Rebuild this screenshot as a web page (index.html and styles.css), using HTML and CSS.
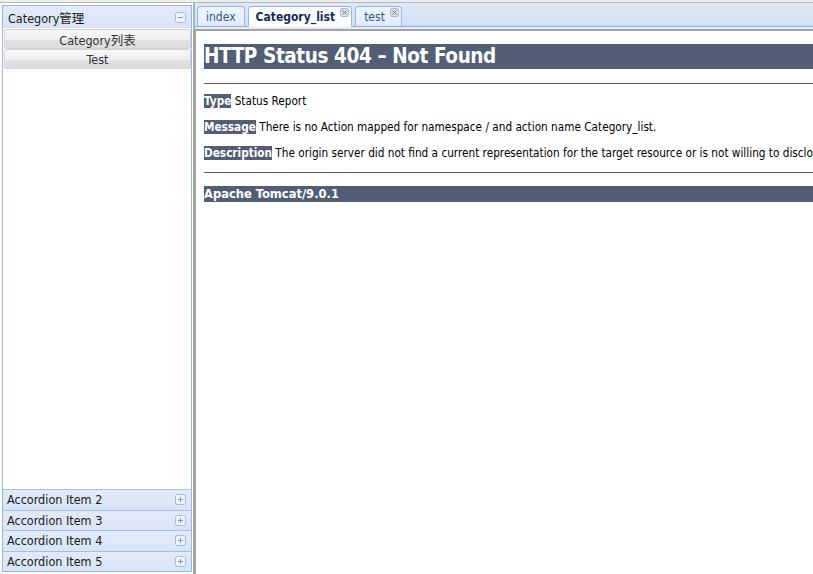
FILE: index.html
```html
<!DOCTYPE html>
<html lang="zh">
<head>
<meta charset="utf-8">
<title>Category</title>
<link rel="stylesheet" href="styles.css">
</head>
<body>
<div class="topline"></div>
<div class="main">
  <aside class="west">
    <div class="acc-head acc-head-open">
      <span class="acc-title">Category管理</span>
      <svg class="tool" width="11" height="11" viewBox="0 0 11 11"><rect x=".5" y=".5" width="10" height="10" rx="2" fill="#EEF3FC" stroke="#9DBAE3"/><path d="M3 5.5h5" stroke="#7E98C2"/></svg>
    </div>
    <div class="acc-body">
      <a class="btn">Category列表</a>
      <a class="btn">Test</a>
    </div>
    <div class="acc-head acc-head-closed">
      <span class="acc-title">Accordion Item 2</span>
      <svg class="tool" width="11" height="11" viewBox="0 0 11 11"><rect x=".5" y=".5" width="10" height="10" rx="2" fill="#EEF3FC" stroke="#9DBAE3"/><path d="M3 5.5h5M5.5 3v5" stroke="#7E98C2"/></svg>
    </div>
    <div class="acc-head acc-head-closed">
      <span class="acc-title">Accordion Item 3</span>
      <svg class="tool" width="11" height="11" viewBox="0 0 11 11"><rect x=".5" y=".5" width="10" height="10" rx="2" fill="#EEF3FC" stroke="#9DBAE3"/><path d="M3 5.5h5M5.5 3v5" stroke="#7E98C2"/></svg>
    </div>
    <div class="acc-head acc-head-closed">
      <span class="acc-title">Accordion Item 4</span>
      <svg class="tool" width="11" height="11" viewBox="0 0 11 11"><rect x=".5" y=".5" width="10" height="10" rx="2" fill="#EEF3FC" stroke="#9DBAE3"/><path d="M3 5.5h5M5.5 3v5" stroke="#7E98C2"/></svg>
    </div>
    <div class="acc-head acc-head-closed">
      <span class="acc-title">Accordion Item 5</span>
      <svg class="tool" width="11" height="11" viewBox="0 0 11 11"><rect x=".5" y=".5" width="10" height="10" rx="2" fill="#EEF3FC" stroke="#9DBAE3"/><path d="M3 5.5h5M5.5 3v5" stroke="#7E98C2"/></svg>
    </div>
  </aside>
  <section class="center">
    <div class="tabs-header">
      <ul class="tabs">
        <li class="tab">index</li>
        <li class="tab tab-selected tab-closable">Category_list<svg class="tab-close" width="9" height="9" viewBox="0 0 9 9"><rect x=".5" y=".5" width="8" height="8" rx="1.5" fill="#DCE2EA" stroke="#AEB8C6"/><path d="M2.5 2.5l4 4M6.5 2.5l-4 4" stroke="#66738A"/></svg></li>
        <li class="tab tab-closable">test<svg class="tab-close" width="9" height="9" viewBox="0 0 9 9"><rect x=".5" y=".5" width="8" height="8" rx="1.5" fill="#DCE2EA" stroke="#AEB8C6"/><path d="M2.5 2.5l4 4M6.5 2.5l-4 4" stroke="#66738A"/></svg></li>
      </ul>
    </div>
    <div class="tabs-gap"></div>
    <div class="frame">
      <h1>HTTP Status 404 – Not Found</h1>
      <hr class="line">
      <p><b>Type</b> Status Report</p>
      <p><b>Message</b> There is no Action mapped for namespace / and action name Category_list.</p>
      <p><b>Description</b> The origin server did not find a current representation for the target resource or is not willing to disclose that one exists.</p>
      <hr class="line line-end">
      <h3>Apache Tomcat/9.0.1</h3>
    </div>
  </section>
</div>
</body>
</html>
```
FILE: styles.css
```css
* { box-sizing: border-box; }
html, body { margin: 0; height: 100%; overflow: hidden; background: #fff; }
body { font-family: "DejaVu Sans Condensed", "DejaVu Sans", sans-serif; font-stretch: condensed; }

.topline { height: 3px; background: #eeeeee; border-bottom: 1px solid #b9b9b9; }

.main { display: flex; height: 571px; width: 1300px; }

/* west accordion */
.west {
  width: 190px; height: 567px; margin: 2px 0 0 2px;
  border: 1px solid #95B8E7; background: #fff;
  display: flex; flex-direction: column;
}
.acc-head {
  display: flex; align-items: center; justify-content: space-between;
  padding: 0 5px 0 5px;
  background: linear-gradient(#E2EBF9, #D8E4F6);
  color: #1b1b1b; font-size: 12.5px;
}
.acc-head-open { height: 22px; }
.acc-head-closed { height: 20.5px; border-top: 1px solid #A3C0E9; padding-left: 4px; }
.acc-title { font-family: "DejaVu Sans Condensed", "DejaVu Sans", "Noto Sans CJK SC", sans-serif; }
.tool { display: block; flex: none; }
.acc-body { flex: 1; padding: 1px 0 0 1px; }
.btn {
  display: flex; align-items: center; justify-content: center;
  height: 20px; border: 1px solid #d4d4d4; border-radius: 2px;
  background: linear-gradient(#f6f6f6 0, #f0f0f0 55%, #e2e2e2 58%, #dcdcdc 100%);
  color: #333; font-size: 12.5px;
  font-family: "DejaVu Sans Condensed", "DejaVu Sans", "Noto Sans CJK SC", sans-serif;
}

/* center tabs */
.center {
  flex: 0 0 1100px; margin-left: 1px; border-left: 1px solid #a9a9a9;
  display: flex; flex-direction: column;
}
.tabs-header {
  height: 24px; padding: 3px 0 0 2px;
  border-left: 1px solid #95B8E7; border-bottom: 1px solid #8FB1E2;
  background: linear-gradient(#DFE8F7, #D3E0F4);
}
.tabs { list-style: none; margin: 0; padding: 0; display: flex; align-items: flex-start; gap: 3px; }
.tab {
  height: 20px; padding: 0 8px; display: flex; align-items: center;
  border: 1px solid #95B8E7; border-bottom: 0; border-radius: 4px 4px 0 0;
  background: linear-gradient(#EFF5FF, #E0ECFF);
  color: #3a5482; font-size: 12px;
}
.tab-closable { padding-right: 2px; }
.tab-selected { height: 21px; background: #fff; color: #0E2D5F; font-weight: bold; padding-left: 7px; }
.tab-close { align-self: flex-start; margin: 1px 0 0 5px; flex: none; }
.tabs-gap { height: 2px; background: #E4ECF9; border-left: 1px solid #95B8E7; }

.frame {
  flex: 1; background: #fff; color: #000;
  border-top: 2px solid #a4a4a4; border-left: 2px solid #a4a4a4;
  padding: 0 8px;
}
.frame h1 {
  margin: 12.5px 0 0; height: 25px; line-height: 25px;
  font-size: 20.5px; letter-spacing: -0.4px; font-weight: bold;
  background: #525D76; color: #fff; white-space: nowrap;
}
.line { margin: 14.5px 0 10px; height: 1px; border: 0; background: #525D76; }
.line-end { margin: 0 0 13px; }
.frame p { margin: 0 0 12px; line-height: 14px; font-size: 11.7px; white-space: nowrap; }
.frame b { background: #525D76; color: #fff; }
.frame h3 {
  margin: 0; line-height: 16px; font-size: 12.8px; font-weight: bold;
  background: #525D76; color: #fff; white-space: nowrap;
}
```
